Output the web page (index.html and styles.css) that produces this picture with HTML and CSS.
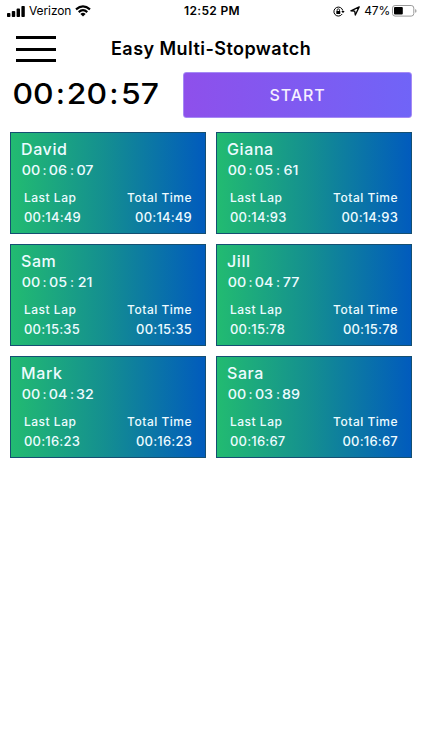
FILE: index.html
```html
<!doctype html>
<html lang="en">
<head>
	<meta charset="UTF-8">
	<meta name="viewport" content="width=device-width, initial-scale=1">
	<title>Easy Multi-Stopwatch</title>
	<link rel="stylesheet" href="styles.css">
</head>
<body>
<!-- status bar -->
<div class="status">
	<div class="status_left">
		<svg class="signal" width="18" height="11" viewBox="0 0 18 11">
			<rect x="0" y="7" width="3.4" height="4" rx="0.8"/>
			<rect x="4.8" y="5" width="3.4" height="6" rx="0.8"/>
			<rect x="9.6" y="2.6" width="3.4" height="8.4" rx="0.8"/>
			<rect x="14.4" y="0" width="3.4" height="11" rx="0.8"/>
		</svg>
		<span class="carrier">Verizon</span>
		<svg class="wifi" width="16" height="12" viewBox="0 0 16 12">
			<g fill="none" stroke="#000" stroke-width="2.1">
				<path d="M1 4.4Q8-1.8 15 4.4"/>
				<path d="M3.7 7.1Q8 3.3 12.3 7.1"/>
			</g>
			<path d="M5.4 8.9Q8 6.8 10.6 8.9L8 11.5Z"/>
		</svg>
	</div>
	<div class="clock">12:52 PM</div>
	<div class="status_right">
		<svg class="lock" width="12" height="11" viewBox="0 0 12 11">
			<path d="M9.2 8A4.5 4.5 0 1 1 9.8 4.6" fill="none" stroke="#000"/>
			<path d="M8.3 4.9h3.3L10 7.2Z"/>
			<rect x="3.3" y="4.9" width="4" height="3" rx="0.4"/>
			<path d="M4.1 5V4a1.2 1.2 0 0 1 2.4 0v1" fill="none" stroke="#000" stroke-width="0.8"/>
		</svg>
		<svg class="arrow" width="10" height="10" viewBox="0 0 10 10">
			<path d="M9.2 .9L.9 4.8 4.7 5.2 5.3 9Z" fill="none" stroke="#000" stroke-width="1.3" stroke-linejoin="round"/>
		</svg>
		<span class="percent">47%</span>
		<svg class="battery" width="25" height="12" viewBox="0 0 25 12">
			<rect x="0.5" y="0.5" width="21.3" height="10.6" rx="2.6" fill="none" stroke="#9a9a9a"/>
			<rect x="2" y="2" width="8.8" height="7.6" rx="1"/>
			<path d="M23.2 4v3.8q1.3-.6 1.3-1.9T23.2 4Z" fill="#9a9a9a"/>
		</svg>
	</div>
</div>
<!-- header -->
<header class="header">
	<div class="menu"><i></i><i></i><i></i></div>
	<h1 class="title">Easy Multi-Stopwatch</h1>
</header>
<!-- main timer -->
<div class="main_timer">
	<div class="big_time"><b>00</b><b>:</b><b>20</b><b>:</b><b>57</b></div>
	<button class="start">START</button>
</div>
<!-- stopwatches -->
<section class="grid">
	<div class="card">
		<h2>David</h2>
		<div class="time"><b>00</b><b>:</b><b>06</b><b>:</b><b>07</b></div>
		<div class="row label"><span>Last Lap</span><span>Total Time</span></div>
		<div class="row value"><span>00:14:49</span><span>00:14:49</span></div>
	</div>
	<div class="card">
		<h2>Giana</h2>
		<div class="time"><b>00</b><b>:</b><b>05</b><b>:</b><b>61</b></div>
		<div class="row label"><span>Last Lap</span><span>Total Time</span></div>
		<div class="row value"><span>00:14:93</span><span>00:14:93</span></div>
	</div>
	<div class="card">
		<h2>Sam</h2>
		<div class="time"><b>00</b><b>:</b><b>05</b><b>:</b><b>21</b></div>
		<div class="row label"><span>Last Lap</span><span>Total Time</span></div>
		<div class="row value"><span>00:15:35</span><span>00:15:35</span></div>
	</div>
	<div class="card">
		<h2>Jill</h2>
		<div class="time"><b>00</b><b>:</b><b>04</b><b>:</b><b>77</b></div>
		<div class="row label"><span>Last Lap</span><span>Total Time</span></div>
		<div class="row value"><span>00:15:78</span><span>00:15:78</span></div>
	</div>
	<div class="card">
		<h2>Mark</h2>
		<div class="time"><b>00</b><b>:</b><b>04</b><b>:</b><b>32</b></div>
		<div class="row label"><span>Last Lap</span><span>Total Time</span></div>
		<div class="row value"><span>00:16:23</span><span>00:16:23</span></div>
	</div>
	<div class="card">
		<h2>Sara</h2>
		<div class="time"><b>00</b><b>:</b><b>03</b><b>:</b><b>89</b></div>
		<div class="row label"><span>Last Lap</span><span>Total Time</span></div>
		<div class="row value"><span>00:16:67</span><span>00:16:67</span></div>
	</div>
</section>
</body>
</html>
```

FILE: styles.css
```css
*{margin:0;padding:0;box-sizing:border-box}
body{
	min-height:750px;
	background:#fff;
	color:#000;
	font-family:Inter,"Liberation Sans",sans-serif;
	font-weight:500;
}
b{font-weight:inherit}
svg{display:block}
/* status bar */
.status{
	display:grid;
	grid-template-columns:1fr auto 1fr;
	align-items:center;
	height:22px;
	padding:0 5px 0 7px;
	font-size:12px;
	line-height:22px;
}
.status_left,.status_right{
	display:flex;
	align-items:center;
}
.status_right{justify-content:flex-end}
.carrier{
	margin:0 4px 0 4px;
	font-weight:400;
	letter-spacing:-.1px;
}
.clock{
	font-weight:600;
	letter-spacing:.35px;
}
.arrow{margin:0 4px 0 5px}
.percent{
	margin-right:2px;
	font-weight:400;
	letter-spacing:-.2px;
}
/* header */
.header{
	display:flex;
	align-items:center;
	height:50px;
	padding:4px 0 0 16px;
}
.menu{
	display:flex;
	flex-direction:column;
	justify-content:space-between;
	width:40px;
	height:26px;
}
.menu i{
	height:3px;
	background:#000;
}
.title{
	margin-left:55px;
	font-size:18px;
	font-weight:600;
	line-height:24px;
	letter-spacing:.45px;
	white-space:nowrap;
}
/* main timer */
.main_timer{
	display:flex;
	justify-content:space-between;
	padding:0 10px 0 12px;
}
.big_time{
	display:grid;
	grid-template-columns:42px 13px 40px 14px 38px;
	height:45px;
	font-size:29px;
	line-height:43px;
	text-align:center;
}
.big_time b:nth-child(odd){transform:scaleX(1.1)}
.start{
	width:229px;
	height:46px;
	border:1px solid #a58af5;
	border-radius:3px;
	background:linear-gradient(to right,#8e50eb,#7064f7);
	color:#f6f0ff;
	font:500 16px/42px Inter,"Liberation Sans",sans-serif;
	letter-spacing:.9px;
}
/* stopwatch cards */
.grid{
	display:grid;
	grid-template-columns:196px 196px;
	gap:10px;
	padding:14px 0 0 10px;
}
.card{
	height:102px;
	padding:5px 13px 0 10px;
	border:1px solid #154f72;
	background:linear-gradient(to right,#22bb71,#148f90 48%,#015bbd);
	color:#edfbff;
}
.card h2{
	font-size:16px;
	font-weight:500;
	line-height:22px;
	letter-spacing:.6px;
}
.time{
	display:grid;
	grid-template-columns:20px 7px 20px 8px 18px;
	font-size:13px;
	line-height:20px;
	text-align:center;
}
.time b:nth-child(odd){transform:scaleX(1.1)}
.row{
	display:flex;
	justify-content:space-between;
	padding-left:3px;
	line-height:19px;
}
.label{
	margin-top:8px;
	font-size:12px;
	letter-spacing:.5px;
}
.value{
	padding-top:1px;
	font-size:13px;
	font-weight:550;
	letter-spacing:.2px;
}
```
